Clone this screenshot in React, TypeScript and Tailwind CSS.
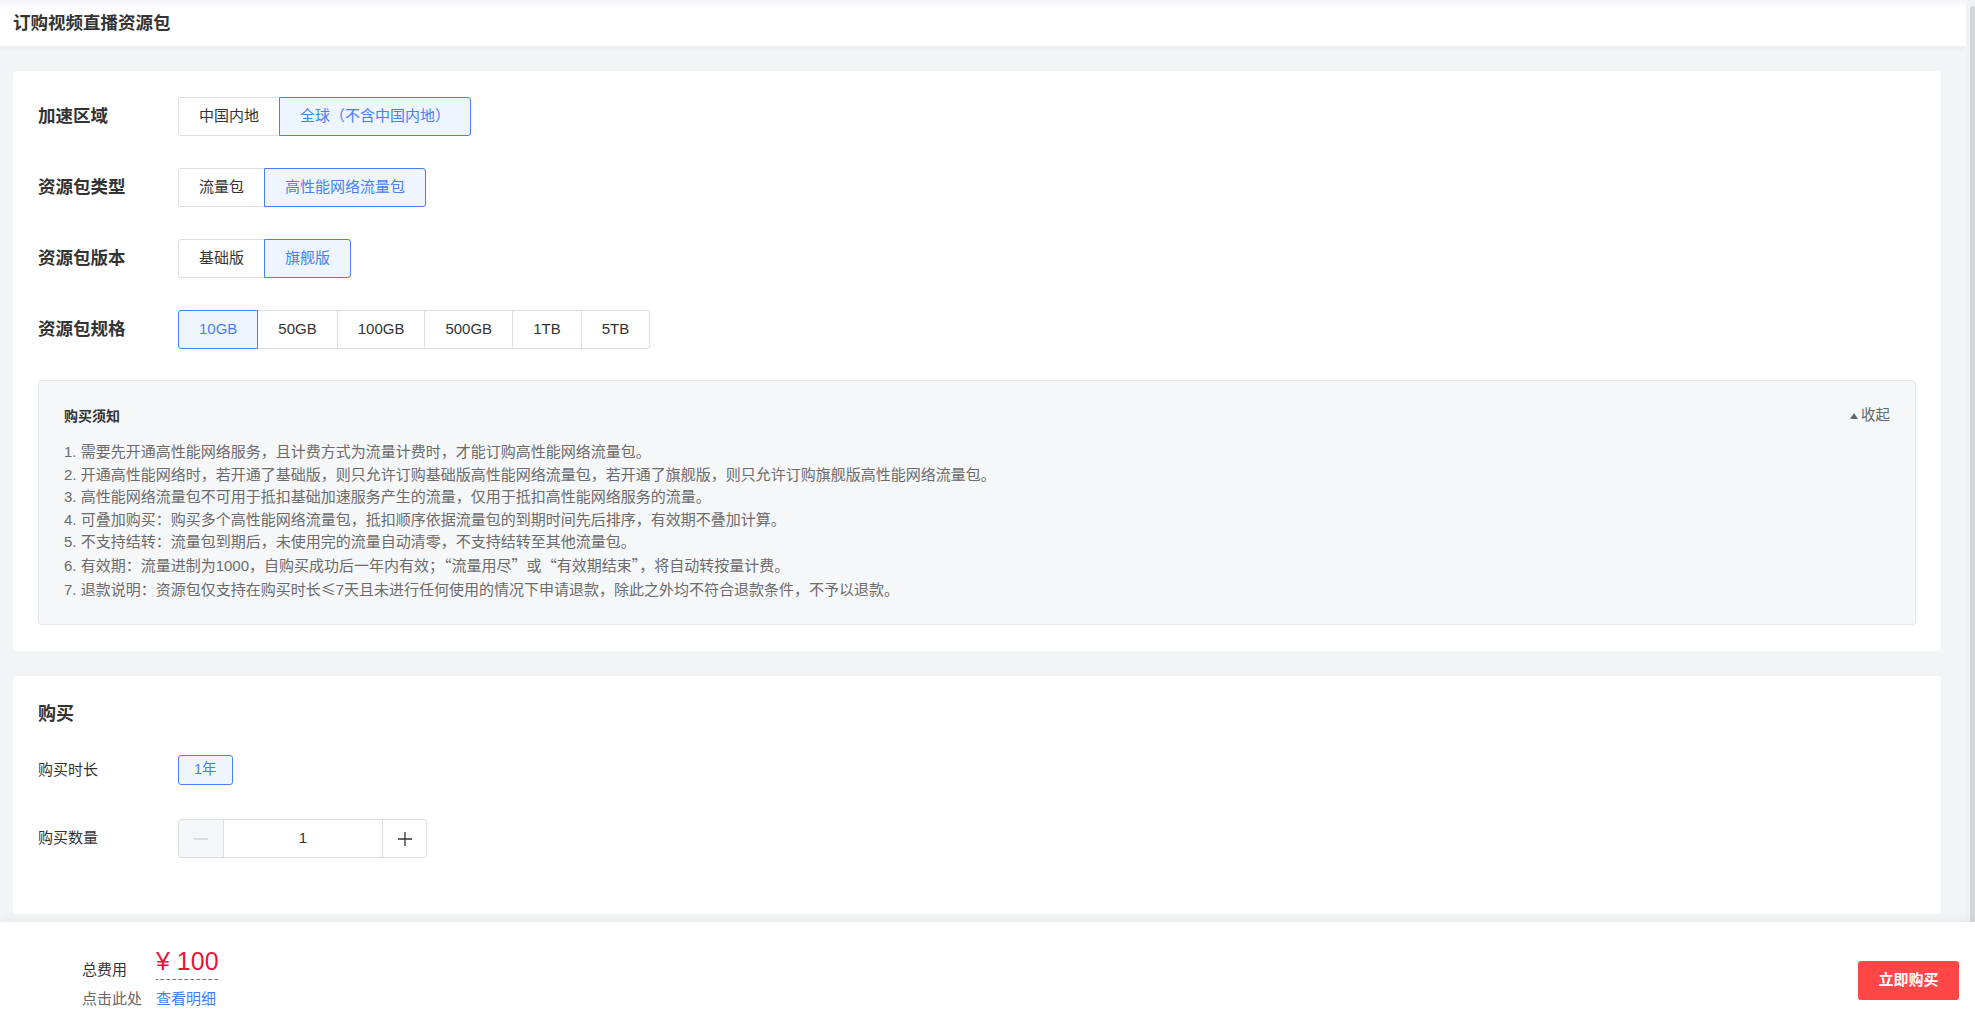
import React from 'react';

/** 选项按钮组 */
const GROUPS = [
  { label: '加速区域', options: ['中国内地', '全球（不含中国内地）'], active: 1 },
  { label: '资源包类型', options: ['流量包', '高性能网络流量包'], active: 1 },
  { label: '资源包版本', options: ['基础版', '旗舰版'], active: 1 },
  { label: '资源包规格', options: ['10GB', '50GB', '100GB', '500GB', '1TB', '5TB'], active: 0 },
];

const NOTES = [
  '1. 需要先开通高性能网络服务，且计费方式为流量计费时，才能订购高性能网络流量包。',
  '2. 开通高性能网络时，若开通了基础版，则只允许订购基础版高性能网络流量包，若开通了旗舰版，则只允许订购旗舰版高性能网络流量包。',
  '3. 高性能网络流量包不可用于抵扣基础加速服务产生的流量，仅用于抵扣高性能网络服务的流量。',
  '4. 可叠加购买：购买多个高性能网络流量包，抵扣顺序依据流量包的到期时间先后排序，有效期不叠加计算。',
  '5. 不支持结转：流量包到期后，未使用完的流量自动清零，不支持结转至其他流量包。',
  '6. 有效期：流量进制为1000，自购买成功后一年内有效；“流量用尽”或“有效期结束”，将自动转按量计费。',
  '7. 退款说明：资源包仅支持在购买时长≤7天且未进行任何使用的情况下申请退款，除此之外均不符合退款条件，不予以退款。',
];

// 引号和≤用中文字体显示（全角）
function NoteText({ text }: { text: string }) {
  const parts = text.split(/([“”≤])/);
  return (
    <>
      {parts.map((p, i) =>
        p === '“' || p === '”' || p === '≤' ? (
          <span key={i} style={{ fontFamily: '"Noto Sans CJK SC", sans-serif' }}>
            {p}
          </span>
        ) : (
          <React.Fragment key={i}>{p}</React.Fragment>
        ),
      )}
    </>
  );
}

function OptionGroup({ options, active }: { options: string[]; active: number }) {
  return (
    <div className="flex">
      {options.map((opt, i) => (
        <button
          key={opt}
          className={
            'h-[39px] px-[20px] border text-[15px] ' +
            (i > 0 ? '-ml-px ' : '') +
            (i === 0 ? 'rounded-l-[3px] ' : '') +
            (i === options.length - 1 ? 'rounded-r-[3px] ' : '') +
            (i === active
              ? 'relative z-10 border-[#4a7ef6] bg-[#eef5ff] text-[#4a7ef6]'
              : 'border-[#dcdee2] bg-white text-[#333]')
          }
        >
          {opt}
        </button>
      ))}
    </div>
  );
}

export default function App() {
  return (
    <div
      className="relative flex h-[1024px] overflow-hidden bg-[#f3f4f6] text-[#333]"
      style={{ fontFamily: '"Liberation Sans", "Noto Sans CJK SC", sans-serif' }}
    >
      {/* 主内容 */}
      <div className="flex-1 flex flex-col">
        {/* 顶部标题 */}
        <div className="h-[46px] flex items-center pl-[13px] bg-[linear-gradient(to_bottom,#f4f5f7_0px,#ffffff_9px)] shadow-[0_2px_6px_rgba(0,0,0,0.04)]">
          <span className="text-[17.5px] font-bold text-[#333]">订购视频直播资源包</span>
        </div>

        {/* 资源包配置 */}
        <div className="mt-[25px] ml-[13px] mr-[25px] bg-white rounded-[4px] pt-[26px] px-[25px] pb-[26px]">
          <div className="flex flex-col gap-[32px]">
            {GROUPS.map((g) => (
              <div key={g.label} className="flex items-center">
                <div className="w-[140px] text-[17.5px] font-bold text-[#333]">{g.label}</div>
                <OptionGroup options={g.options} active={g.active} />
              </div>
            ))}
          </div>

          {/* 购买须知 */}
          <div className="mt-[31px] border border-[#e4e6eb] bg-[#f6f7f9] rounded-[4px] pt-[25px] pb-[23px] px-[25px]">
            <div className="flex items-center justify-between h-[20px]">
              <span className="text-[14px] font-bold text-[#333]">购买须知</span>
              <span className="flex items-center gap-[3px] text-[14.5px] text-[#666]">
                <svg width="8" height="6" viewBox="0 0 8 6">
                  <polygon points="4,0 8,6 0,6" fill="#666" />
                </svg>
                收起
              </span>
            </div>
            <div className="mt-[15px] flex flex-col">
              {NOTES.map((n) => (
                <div key={n} className="text-[15px] leading-[22.6px] text-[#6b6b6b]">
                  <NoteText text={n} />
                </div>
              ))}
            </div>
          </div>
        </div>

        {/* 购买 */}
        <div className="mt-[25px] ml-[13px] mr-[25px] bg-white rounded-[4px] pt-[25px] px-[25px] pb-[56px]">
          <div className="text-[18px] leading-[26px] font-bold text-[#333]">购买</div>
          <div className="mt-[28px] flex items-center">
            <div className="w-[140px] text-[15px] text-[#333]">购买时长</div>
            <button className="h-[30px] px-[15px] border border-[#4a7ef6] bg-[#eef5ff] text-[#4a7ef6] rounded-[3px] text-[14.5px]">
              1年
            </button>
          </div>
          <div className="mt-[34px] flex items-center">
            <div className="w-[140px] text-[15px] text-[#333]">购买数量</div>
            <div className="flex h-[39px] border border-[#dcdee2] rounded-[3px] overflow-hidden">
              <div className="w-[45px] flex items-center justify-center bg-[#f5f6f8] border-r border-[#dcdee2]">
                <svg width="16" height="16" viewBox="0 0 16 16">
                  <line x1="1" y1="8" x2="15" y2="8" stroke="#cfd2d6" strokeWidth="1.3" />
                </svg>
              </div>
              <div className="w-[158px] flex items-center justify-center text-[15px] text-[#333]">1</div>
              <div className="w-[44px] flex items-center justify-center border-l border-[#dcdee2]">
                <svg width="16" height="16" viewBox="0 0 16 16">
                  <line x1="1" y1="8" x2="15" y2="8" stroke="#333" strokeWidth="1.3" />
                  <line x1="8" y1="1" x2="8" y2="15" stroke="#333" strokeWidth="1.3" />
                </svg>
              </div>
            </div>
          </div>
        </div>
      </div>

      {/* 滚动条 */}
      <div className="w-[9px] flex justify-end bg-[#f1f2f3]">
        <div className="w-[5px] mt-[6px] h-[960px] bg-[#d5d6d8] rounded-t-[3px]" />
      </div>

      {/* 底部结算栏 */}
      <div className="absolute left-0 right-0 bottom-0 h-[102px] bg-white shadow-[0_-3px_8px_rgba(0,0,0,0.05)] flex items-start justify-between pl-[82px] pr-[16px] pt-[27px]">
        <div className="flex flex-col">
          <div className="flex items-end">
            <span className="w-[74px] text-[15px] leading-[20px] text-[#333]">总费用</span>
            <span className="text-[25px] leading-[25px] pb-[6px] text-[#e5173a] bg-[linear-gradient(to_right,#777_60%,transparent_60%)] bg-[length:6px_1px] bg-repeat-x bg-bottom">
              ¥ 100
            </span>
          </div>
          <div className="mt-[9px] flex items-center text-[15px] leading-[20px]">
            <span className="w-[74px] text-[#666]">点击此处</span>
            <span className="text-[#3f7ff6]">查看明细</span>
          </div>
        </div>
        <button className="mt-[12px] w-[101px] h-[39px] rounded-[3px] bg-[#ff4747] text-white text-[15px] font-bold">
          立即购买
        </button>
      </div>
    </div>
  );
}
